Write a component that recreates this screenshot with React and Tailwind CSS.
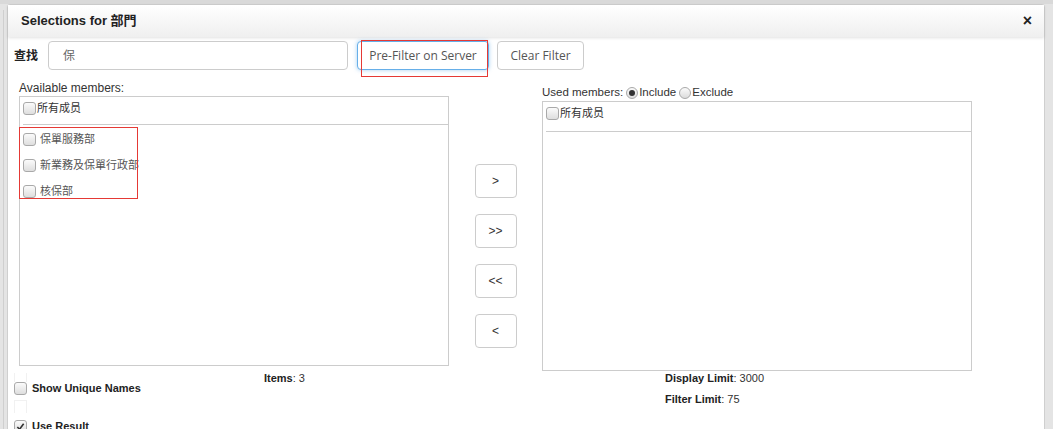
import React from "react";

const cjk = { fontFamily: '"Liberation Sans", "Noto Sans CJK TC", sans-serif' };

function Box({ checked = false }) {
  return (
    <span className="inline-flex h-[13px] w-[13px] shrink-0 items-center justify-center rounded-[3px] border border-[#a9a9a9] bg-gradient-to-b from-[#fbfbfb] to-[#dedede]">
      {checked && (
        <svg viewBox="0 0 10 10" className="h-[9px] w-[9px]">
          <path d="M1.5 5.5 L4 8 L8.5 2" fill="none" stroke="#333" strokeWidth="1.8" />
        </svg>
      )}
    </span>
  );
}

function Radio({ on = false }) {
  return (
    <span className="inline-flex h-[12px] w-[12px] shrink-0 items-center justify-center rounded-full border border-[#a9a9a9] bg-gradient-to-b from-[#fbfbfb] to-[#dcdcdc]">
      {on && <span className="h-[6px] w-[6px] rounded-full bg-[#333]" />}
    </span>
  );
}

function MoveButton({ label }) {
  return (
    <button className="flex h-[34px] w-[42px] items-center justify-center rounded-[4px] border border-[#cccccc] bg-white text-[12px] text-[#333]">
      {label}
    </button>
  );
}

const members = ["保單服務部", "新業務及保單行政部", "核保部"];

export default function App() {
  return (
    <div
      className="relative h-[429px] w-[1053px] overflow-hidden bg-[#e4e4e4] pl-[7px] pr-[8px] pt-[4px] text-[#333]"
      style={cjk}
    >
      <div className="absolute left-0 top-0 h-[4px] w-full bg-[#d9d9d9]" />
      <div className="absolute left-[3px] top-[10px] h-[419px] w-[1px] bg-[#cfcfcf]" />

      <div className="relative flex h-[440px] flex-col rounded-t-[3px] border border-[#cfcfcf] bg-white">
        {/* header */}
        <div className="flex h-[32px] shrink-0 items-center justify-between bg-gradient-to-b from-white to-[#efefef] pl-[13px] pr-[12px] shadow-[0_1px_3px_rgba(0,0,0,0.12)]">
          <span className="text-[13px] font-bold text-[#222]">Selections for 部門</span>
          <span className="text-[16px] font-bold leading-none text-[#222]">×</span>
        </div>

        {/* search row */}
        <div className="mt-[4px] flex items-center pl-[6px]">
          <span className="w-[34px] text-[12px] font-bold text-[#222]">查找</span>
          <div className="flex h-[29px] w-[300px] items-center rounded-[4px] border border-[#cccccc] pl-[14px] text-[12px] text-[#666]">
            保
          </div>
          <div className="relative ml-[9px]">
            <button
              className="flex h-[29px] w-[132px] items-center justify-center rounded-[4px] border border-[#66afe9] bg-white text-[12px] text-[#555] shadow-[0_0_4px_rgba(102,175,233,0.6)]"
              style={{ fontFamily: '"Open Sans", sans-serif' }}
            >
              Pre-Filter on Server
            </button>
            <div className="pointer-events-none absolute left-[4px] top-[-1px] h-[37px] w-[127px] border border-[#e53935]" />
          </div>
          <button
            className="ml-[8px] flex h-[29px] w-[87px] items-center justify-center rounded-[4px] border border-[#cccccc] bg-white text-[12px] text-[#555]"
            style={{ fontFamily: '"Open Sans", sans-serif' }}
          >
            Clear Filter
          </button>
        </div>

        {/* main */}
        <div className="mt-[11px] flex pl-[11px]">
          {/* available */}
          <div className="w-[430px]">
            <div className="h-[15px] text-[12px] leading-[15px] text-[#333]">Available members:</div>
            <div className="h-[270px] border border-[#cccccc]">
              <div className="ml-[3px] flex h-[28px] items-start gap-[1px] border-b border-[#cccccc] pt-[5px] text-[11px]">
                <Box />
                <span className="leading-[13px]">所有成员</span>
              </div>
              <div className="relative ml-[3px] mt-[8px] flex flex-col gap-[13px]">
                {members.map((m) => (
                  <div key={m} className="flex items-center gap-[4px] text-[11px] text-[#555]">
                    <Box />
                    <span className="leading-[13px]">{m}</span>
                  </div>
                ))}
                <div className="pointer-events-none absolute left-[-4px] top-[-6px] h-[72px] w-[119px] border border-[#e53935]" />
              </div>
            </div>
          </div>

          {/* move buttons */}
          <div className="flex w-[93px] flex-col items-center gap-[16px] pt-[83px]">
            <MoveButton label=">" />
            <MoveButton label=">>" />
            <MoveButton label="<<" />
            <MoveButton label="<" />
          </div>

          {/* used */}
          <div className="w-[430px]">
            <div className="mt-[3px] flex h-[17px] items-center gap-[1px] text-[11.5px] text-[#333]">
              <span className="mr-[2px]">Used members:</span>
              <Radio on />
              <span className="mr-[2px]">Include</span>
              <Radio />
              <span>Exclude</span>
            </div>
            <div className="h-[270px] border border-[#cccccc]">
              <div className="ml-[3px] flex h-[30px] items-start gap-[1px] border-b border-[#cccccc] pt-[5px] text-[11px]">
                <Box />
                <span className="leading-[13px]">所有成员</span>
              </div>
            </div>
          </div>
        </div>

        {/* bottom */}
        <div className="flex text-[11px] leading-[13px]">
          <div className="flex w-[250px] flex-col pl-[6px] pt-[2px]">
            <div className="h-[9px] w-[13px] border-x border-[#f1f1f1]" />
            <div className="flex h-[13px] items-center gap-[5px]">
              <Box />
              <span className="font-bold text-[#222]">Show Unique Names</span>
            </div>
            <div className="mt-[5px] h-[13px] w-[13px] border-x border-t border-[#f1f1f1]" />
            <div className="mt-[7px] flex h-[13px] items-center gap-[5px]">
              <Box checked />
              <span className="font-bold text-[#222]">Use Result</span>
            </div>
          </div>
          <div className="w-[407px] pl-[6px] pt-[1px]">
            <span className="font-bold text-[#222]">Items</span>: 3
          </div>
          <div className="flex flex-col gap-[8px] pt-[1px]">
            <div>
              <span className="font-bold text-[#222]">Display Limit</span>: 3000
            </div>
            <div>
              <span className="font-bold text-[#222]">Filter Limit</span>: 75
            </div>
          </div>
        </div>
      </div>
    </div>
  );
}
